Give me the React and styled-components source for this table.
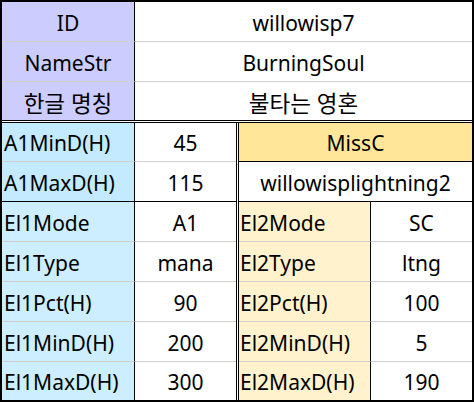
import styled, { createGlobalStyle } from 'styled-components';

const GlobalStyle = createGlobalStyle`
	html, body {
		margin: 0;
		padding: 0;
		background: #fff;
	}
	body {
		font-family: "Noto Sans", "Noto Sans CJK KR", sans-serif;
		color: #000;
	}
`

const Sheet = styled.div`
	width: 474px;
	height: 402px;
	box-sizing: border-box;
	border: 2px solid #000;
	display: flex;
	flex-direction: column;
	font-size: 21px;
	background: #fff;
	`
const TopGrid = styled.div`
	display: grid;
	grid-template-columns: 133px 1fr;
	grid-template-rows: 40px 40px 38px;
	border-bottom: 3px double #000;
	`
const Bottom = styled.div`
	display: flex;
	flex: 1;
	`
const Half = styled.div`
	display: grid;
	grid-template-columns: ${p => p.$label}px 1fr;
	grid-template-rows: 39px repeat(5, 40px) 38px;
	width: ${p => p.$width}px;
	box-sizing: border-box;
	border-right: ${p => p.$double ? '3px double #000' : 'none'};
	`
const lines = {
	gray: '1px solid #cfcfcf',
	black: '1px solid #000',
	none: 'none',
};

const Cell = styled.div`
	display: flex;
	align-items: center;
	justify-content: ${p => p.$left ? 'flex-start' : 'center'};
	padding: 2px 0 0 ${p => p.$left ? p.$pad ?? 2 : 0}px;
	box-sizing: border-box;
	background: ${p => p.$bg || '#fff'};
	border-bottom: ${p => lines[p.$line || 'gray']};
	border-right: ${p => p.$divider ? '1px solid #000' : 'none'};
	grid-column: ${p => p.$span ? 'span 2' : 'auto'};
	font-size: ${p => p.$ko ? '22.5px' : 'inherit'};
	white-space: nowrap;
	overflow: hidden;
	`

const LAVENDER = '#ccccff';
const BLUE_A = '#c3eafe';
const BLUE_E = '#cdeefe';
const GOLD = '#ffe699';
const CREAM = '#fff2cc';

const header = [
	['ID', 'willowisp7'],
	['NameStr', 'BurningSoul'],
	['한글 명칭', '불타는 영혼', true],
];

const left = [
	['A1MinD(H)', '45', BLUE_A, 'gray'],
	['A1MaxD(H)', '115', BLUE_A, 'black'],
	['El1Mode', 'A1', BLUE_E, 'gray'],
	['El1Type', 'mana', BLUE_E, 'gray'],
	['El1Pct(H)', '90', BLUE_E, 'gray'],
	['El1MinD(H)', '200', BLUE_E, 'gray'],
	['El1MaxD(H)', '300', BLUE_E, 'none'],
];

const right = [
	['El2Mode', 'SC'],
	['El2Type', 'ltng'],
	['El2Pct(H)', '100'],
	['El2MinD(H)', '5'],
	['El2MaxD(H)', '190'],
];

function App() {
	return (
		<>
			<GlobalStyle />
			<Sheet>
				<TopGrid>
					{header.map(([k, v, ko], i) => {
						const line = i === header.length - 1 ? 'none' : 'gray';
						return [
							<Cell key={k} $bg={LAVENDER} $divider $line={line} $ko={ko}>{k}</Cell>,
							<Cell key={v} $line={line} $ko={ko}>{v}</Cell>,
						];
					})}
				</TopGrid>
				<Bottom>
					<Half $label={133} $width={237} $double>
						{left.map(([k, v, bg, line]) => [
							<Cell key={k} $bg={bg} $left $divider $line={line}>{k}</Cell>,
							<Cell key={k + 'v'} $line={line}>{v}</Cell>,
						])}
					</Half>
					<Half $label={132} $width={233}>
						<Cell $span $bg={GOLD} $line="black">MissC</Cell>
						<Cell $span $line="black">willowisplightning2</Cell>
						{right.map(([k, v], i) => {
							const line = i === right.length - 1 ? 'none' : 'gray';
							return [
								<Cell key={k} $bg={CREAM} $left $pad={1} $divider $line={line}>{k}</Cell>,
								<Cell key={k + 'v'} $line={line}>{v}</Cell>,
							];
						})}
					</Half>
				</Bottom>
			</Sheet>
		</>
	);
}

export default App
